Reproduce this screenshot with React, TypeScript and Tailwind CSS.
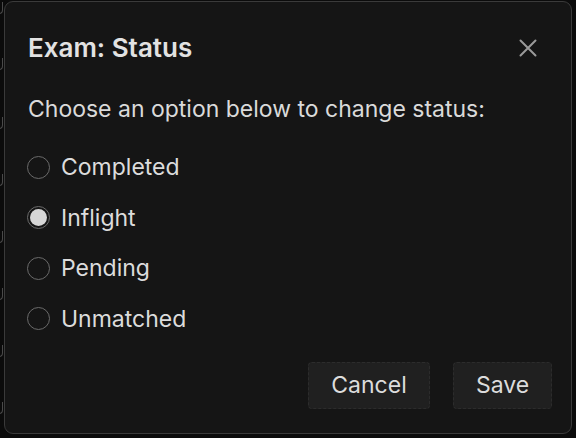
import React, { useState } from "react";

const options = ["Completed", "Inflight", "Pending", "Unmatched"];
const marks = [2, 58, 117, 174, 231, 288, 345, 402];

export default function App() {
  const [value, setValue] = useState("Inflight");
  return (
    <div
      className="w-[576px] h-[438px] bg-[#0b0b0b] relative overflow-hidden"
      style={{ fontFamily: "Inter, 'Noto Sans', sans-serif" }}
    >
      {marks.map((y) => (
        <div
          key={y}
          className="absolute left-[-6px] w-[9px] h-[12px] rounded-br-[4px] border-r border-b border-[#4a4a4a]"
          style={{ top: y }}
        />
      ))}
      <div className="absolute left-[4px] top-[1px] w-[568px] h-[433px] rounded-[9px] border border-[#3a3a3a] bg-[#151515] flex flex-col pl-[22px] pr-[19px] pt-[30px] pb-[24px]">
        <div className="flex items-center justify-between">
          <h2 className="pl-[1px] text-[26px] font-semibold text-[#e2e2e2] leading-[32px]">Exam: Status</h2>
          <button className="w-[18px] h-[18px] mr-[15px] flex items-center justify-center text-[#9a9a9a]">
            <svg width="18" height="18" viewBox="0 0 18 18" fill="none" stroke="currentColor" strokeWidth="2" strokeLinecap="round">
              <path d="M1.5 1.5 16.5 16.5M16.5 1.5 1.5 16.5" />
            </svg>
          </button>
        </div>
        <p className="mt-[31px] pl-[1px] text-[23px] text-[#dadada] leading-[28px]">
          Choose an option below to change status:
        </p>
        <div className="mt-[32px] flex flex-col gap-[26.5px]">
          {options.map((o) => (
            <label key={o} className="flex items-center gap-[11px] cursor-pointer" onClick={() => setValue(o)}>
              <span className="w-[23px] h-[23px] rounded-full border-[1.5px] border-[#6a6a6a] flex items-center justify-center">
                {value === o && <span className="w-[17px] h-[17px] rounded-full bg-[#d6d6d6]" />}
              </span>
              <span className="text-[23px] text-[#dcdcdc] leading-[24px]">{o}</span>
            </label>
          ))}
        </div>
        <div className="mt-auto flex justify-end gap-[23px]">
          <button className="w-[122px] h-[47px] rounded-[4px] bg-[#202020] border border-dashed border-[#2c2c2c] text-[23px] text-[#dcdcdc]">
            Cancel
          </button>
          <button className="w-[99px] h-[47px] rounded-[4px] bg-[#202020] border border-dashed border-[#2c2c2c] text-[23px] text-[#dcdcdc]">
            Save
          </button>
        </div>
      </div>
    </div>
  );
}
